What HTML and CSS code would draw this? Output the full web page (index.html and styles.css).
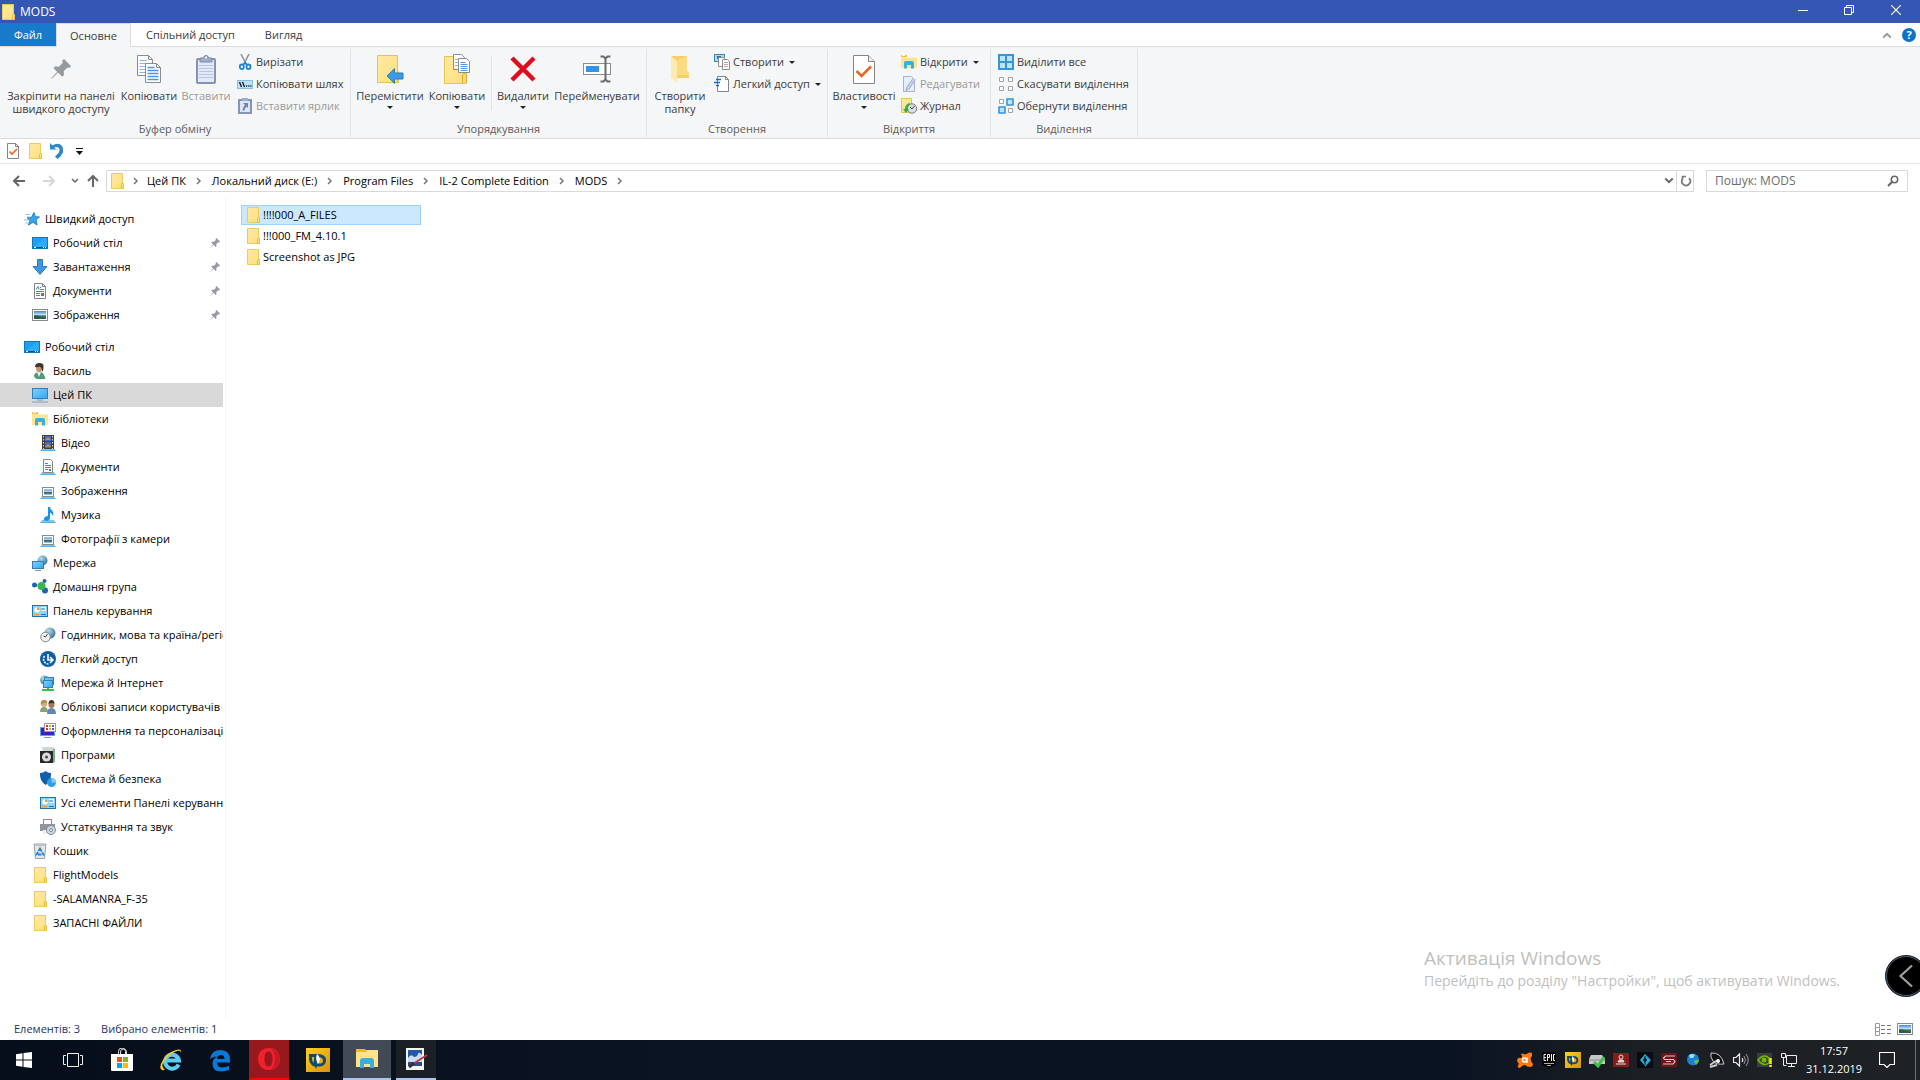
FILE: index.html
```
<!DOCTYPE html>
<html lang="uk">
<head>
  <meta charset="UTF-8">
  <title>MODS</title>
  <link rel="stylesheet" href="styles.css">
</head>
<body>

  <!-- Icon sprite -->
  <svg class="sprite" aria-hidden="true">
    <defs>
      <linearGradient id="gFolder" x1="0" y1="0" x2="1" y2="1"><stop offset="0" stop-color="#ffeaa6"/><stop offset="1" stop-color="#fddf78"/></linearGradient>
      <linearGradient id="gScreen" x1="0" y1="0" x2="1" y2="1"><stop offset="0" stop-color="#7fd0ff"/><stop offset="1" stop-color="#2fa6f5"/></linearGradient>
      <linearGradient id="gPhoto" x1="0" y1="0" x2="0" y2="1"><stop offset="0" stop-color="#3d87dd"/><stop offset=".5" stop-color="#cfe8f8"/><stop offset=".6" stop-color="#386a66"/><stop offset="1" stop-color="#3f8aa8"/></linearGradient>
      <linearGradient id="gGold" x1="0" y1="0" x2="1" y2="1"><stop offset="0" stop-color="#ffd21c"/><stop offset="1" stop-color="#d89010"/></linearGradient>
      <radialGradient id="gGlobe" cx=".35" cy=".3" r=".8"><stop offset="0" stop-color="#b7dcea"/><stop offset="1" stop-color="#2b6f95"/></radialGradient>
    </defs>

    <symbol id="folder" viewBox="0 0 16 16">
      <path d="M2.5.5h11v10h1v5h-12z" fill="url(#gFolder)" stroke="#eccb5c"/>
      <path d="M12.500 15.500v-4l1-1.500 1 1.500v4z" fill="#ffe28a" stroke="#e6bd3e"/>
    </symbol>
    <symbol id="pin" viewBox="0 0 20 20">
      <path d="M13 0l7 7-2 2-1.500-.6-3.800 3.800.3 3.800-1.800 1.800-4.200-4.200L1.500 19 0 20l1-1.700 5.200-5.300L2.500 9l1.800-1.700 3.600.4 3.900-3.900L11 2z" fill="#929ba1"/>
    </symbol>
    <symbol id="pages" viewBox="0 0 24 28">
      <path d="M.5.5h11l4 4v16H.5z" fill="#fff" stroke="#8c8c8c"/><path d="M11.500.5v4h4" fill="none" stroke="#8c8c8c"/>
      <path d="M2.500 5.500h7M2.500 8.500h11M2.500 11.500h11M2.500 14.500h11M2.500 17.500h11" stroke="#86b6ee"/>
      <path d="M8.500 8.500h11l4 4v15h-15z" fill="#fff" stroke="#8c8c8c"/><path d="M19.500 8.500v4h4" fill="none" stroke="#8c8c8c"/>
      <path d="M10.500 12.500h7M10.500 15.500h11M10.500 18.500h11M10.500 21.500h11M10.500 24.500h11" stroke="#4597ef" stroke-width="1.500"/>
    </symbol>
    <symbol id="paste" viewBox="0 0 20 29">
      <rect x="1" y="4" width="18" height="24" rx="1" fill="#e3eaf5" stroke="#8393b2" stroke-width="2"/>
      <path d="M3 10.500h14M3 13.500h14M3 16.500h14M3 19.500h14M3 22.500h14" stroke="#b6c6de"/>
      <path d="M4 3h3.500a2.500 2.500 0 015 0H16v4H4z" fill="#9faec6" stroke="#7b8aa8"/><circle cx="10" cy="2.500" r="1" fill="#fff"/>
    </symbol>
    <symbol id="cut" viewBox="0 0 16 16">
      <path d="M4 0L9.500 11M12 0L6.500 11" stroke="#8b949c" stroke-width="1.500"/>
      <ellipse cx="4.800" cy="12.800" rx="2" ry="2.300" fill="#fff" stroke="#1b84cf" stroke-width="1.800"/>
      <ellipse cx="11.500" cy="12.800" rx="2" ry="2.300" fill="#fff" stroke="#1b84cf" stroke-width="1.800"/>
      <path d="M6 11L8 8.500l2.200 2.500" stroke="#1b84cf" stroke-width="1.600" fill="none"/>
    </symbol>
    <symbol id="path" viewBox="0 0 16 16">
      <rect x=".5" y="4.500" width="15" height="8" fill="#b9e2fb" stroke="#86bfe2"/>
      <path d="M2.500 6l2 5M5.500 6l2 5" stroke="#12202b" stroke-width="1.400"/><path d="M9 10h1.200M11.200 10h1.200M13.300 10h1.200" stroke="#12202b" stroke-width="1.400"/>
    </symbol>
    <symbol id="shortcut" viewBox="0 0 16 16">
      <rect x="2" y="2" width="12" height="13" fill="#dde5f2" stroke="#8495b8" stroke-width="2"/><rect x="5" y="0" width="6" height="3" fill="#9eadc9"/>
      <path d="M6 5h5v5L9.500 8.500Q7.500 10 7.500 12.500H5.500Q5.500 9 8 7z" fill="#6d84ad"/>
    </symbol>
    <symbol id="move" viewBox="0 0 28 30">
      <path d="M1.500 1.500h20v16h1v11h-21z" fill="url(#gFolder)" stroke="#e6c24f"/><path d="M21.500 18v10" stroke="#e6c24f"/>
      <path d="M11 22l7.500-7.500v4.500H27v6h-8.500v4.500z" fill="#3a9be6" stroke="#2b7fc4"/>
    </symbol>
    <symbol id="copyto" viewBox="0 0 28 30">
      <path d="M1.500 2.500h18v15h4v12h-22z" fill="url(#gFolder)" stroke="#e6c24f"/><path d="M19.500 29V21l2-2 2 2v8" fill="#fddb70" stroke="#dcae34"/>
      <path d="M10.500.5h8l3 3v12h-11z" fill="#fff" stroke="#8c8c8c"/><path d="M12 5.500h6M12 8.500h3M12 11.500h3" stroke="#86b6ee"/>
      <path d="M15.500 4.500h8l3 3v11h-11z" fill="#fff" stroke="#8c8c8c"/><path d="M17.500 8.500h5M17.500 10.500h7M17.500 12.500h7M17.500 14.500h7M17.500 16.500h7" stroke="#4597ef"/>
    </symbol>
    <symbol id="delete" viewBox="0 0 26 26">
      <path d="M2 2l22 22M24 2L2 24" stroke="#e00b1c" stroke-width="4.500"/>
    </symbol>
    <symbol id="rename" viewBox="0 0 28 28">
      <rect x=".5" y="8.500" width="27" height="11" fill="#fff" stroke="#8c8c8c"/><rect x="3" y="11" width="13" height="6" fill="#2f95e8"/>
      <path d="M17.500 1.500h3l2 2 2-2h3M22.500 3v22M17.500 26.500h3l2-2 2 2h3" fill="none" stroke="#6a6a6a" stroke-width="2"/>
    </symbol>
    <symbol id="newfolder" viewBox="0 0 20 28">
      <path d="M1 1h16v15l2 1v6H1z" fill="#f7cf68"/><path d="M1 1l6 5v22l-4-3-2-3z" fill="#ffeab0"/><path d="M7 6l10-5v15l2 1v3H7z" fill="#fadb82"/>
    </symbol>
    <symbol id="newitem" viewBox="0 0 16 16">
      <rect x=".5" y=".5" width="10" height="7" fill="#a8dcf5" stroke="#3c87b4"/><rect x="3" y="2" width="4" height="3" fill="#356b8b"/>
      <path d="M4.500 3.500h6v9h-6z" fill="#fff" stroke="#909090"/><path d="M8.500 5.500h5l2 2v8h-7z" fill="#fff" stroke="#8c8c8c"/>
      <path d="M10 8.500h4M10 10.500h4M10 12.500h4" stroke="#c79ea5"/>
    </symbol>
    <symbol id="easy" viewBox="0 0 16 16">
      <path d="M3.500.5h8l3 3v12h-11z" fill="#fff" stroke="#858585"/><path d="M11.500.5v3h3" fill="none" stroke="#858585"/>
      <path d="M2 3.500h5M0 6.500h6M2 9.500h3" stroke="#1c6fae" stroke-width="1.300"/>
    </symbol>
    <symbol id="props" viewBox="0 0 22 29">
      <path d="M.5.5h15l6 6v22H.5z" fill="#fff" stroke="#858585"/><path d="M15.500.5v6h6" fill="#eee" stroke="#858585"/>
      <path d="M3.500 16l5 5L18 11.500" fill="none" stroke="#ee6420" stroke-width="2.500"/>
    </symbol>
    <symbol id="propsSmall" viewBox="0 0 16 16">
      <path d="M2.500.5h8l3 3v12h-11z" fill="#fff" stroke="#858585"/><path d="M10.500.5v3h3" fill="none" stroke="#858585"/>
      <path d="M4.500 8.500L7 11l5-5" fill="none" stroke="#ee6420" stroke-width="1.600"/>
    </symbol>
    <symbol id="library" viewBox="0 0 16 16">
      <path d="M0 2h5l1 1.500h10V14H0z" fill="#ffe590"/><path d="M0 1h6v2H0z" fill="#f0c248"/><path d="M1 1.500h3" stroke="#fff8d8"/>
      <path d="M3 14.500V9q0-2 2-2h6q2 0 2 2v5.500h-3V11H6v3.500z" fill="#35b0e4"/>
    </symbol>
    <symbol id="edit" viewBox="0 0 16 16">
      <path d="M2.500.5h8l3 3v12h-11z" fill="#e6eefa" stroke="#a5b4d2"/><path d="M14.500 3.500L8 13l-3 1.500.5-3L12 2.500" fill="#c5d3ea" stroke="#9cadcc"/>
    </symbol>
    <symbol id="history" viewBox="0 0 16 16">
      <path d="M.5.5h10v14H.5z" fill="url(#gFolder)" stroke="#e6c24f"/><circle cx="11" cy="10.500" r="4.700" fill="#dcdedf" stroke="#77797a"/>
      <path d="M11 11l2.500-3M11 11L9 9" stroke="#444"/><path d="M2 11h2q0-5 5-6v2q-3 1-2.500 4H8l-3 4z" fill="#2bb23c"/>
    </symbol>
    <symbol id="selAll" viewBox="0 0 16 16">
      <path d="M1 1h14v14H1z" fill="#bfe3fb" stroke="#3395dd" stroke-width="2"/><path d="M8 0v16M0 8h16" stroke="#3395dd" stroke-width="2"/>
    </symbol>
    <symbol id="selNone" viewBox="0 0 16 16">
      <path d="M1.500 1.500h4v4h-4zM10.500 1.500h4v4h-4zM1.500 10.500h4v4h-4zM10.500 10.500h4v4h-4z" fill="#fff" stroke="#a2a2a2"/>
    </symbol>
    <symbol id="selInv" viewBox="0 0 16 16">
      <path d="M1.500 1.500h4v4h-4zM10.500 10.500h4v4h-4z" fill="#fff" stroke="#a2a2a2"/><path d="M9 1h6v6H9zM1 9h6v6H1z" fill="#bfe3fb" stroke="#3395dd" stroke-width="1.600"/>
    </symbol>
    <symbol id="undo" viewBox="0 0 16 16">
      <path d="M1 0v6.500h6.500L5 4.500q4.500-1.500 5.500 1.500T6 13.500L8.500 16Q15 11 14 6T9 .7Q6 .5 3.500 2.500z" fill="#2a86cf"/>
    </symbol>
    <symbol id="arrow" viewBox="0 0 16 16"><path d="M14 8H3M8 3L3 8l5 5" fill="none" stroke="currentColor" stroke-width="2"/></symbol>
    <symbol id="chev" viewBox="0 0 8 8"><path d="M1 2l3 3 3-3" fill="none" stroke="currentColor" stroke-width="1.500"/></symbol>
    <symbol id="star" viewBox="0 0 16 16">
      <path d="M10 1.500l1.300 4.200 4.200.3-3.500 2.600L13 14l-4-2.700L4.500 14l1.500-4.500-3-2.700 4.500-.5z" fill="#35a7ec" stroke="#1f84c4"/><path d="M1.500 3.500h4M3 6h3M0 9h4M1.500 12h3" stroke="#7ac3ee"/>
    </symbol>
    <symbol id="desktop" viewBox="0 0 16 16">
      <rect x=".5" y="2.500" width="15" height="11" fill="#18a0fb" stroke="#1478b5"/><path d="M1 13L12 3h3v10z" fill="#3fb2ff" opacity=".6"/><path d="M1 12.500h14" stroke="#0b5386"/><path d="M2 12.500h2M11 12.500h1M13 12.500h1" stroke="#fff"/>
    </symbol>
    <symbol id="down" viewBox="0 0 16 16"><path d="M5.500.5h5v7h4.500L8 15.500 1 7.500h4.500z" fill="#3b97e3" stroke="#2c78b8"/></symbol>
    <symbol id="doc" viewBox="0 0 16 16">
      <path d="M2.500.5h8l3 3v12h-11z" fill="#fff" stroke="#858585"/><path d="M10.500.5v3h3" fill="none" stroke="#858585"/>
      <path d="M4 6.500l2-3 1 3M8 4.500h1M8 6.500h4M4 8.500h8M4 10.500h4M4 12.500h4" fill="none" stroke="#2492d8"/><path d="M9 10h3v3H9z" fill="#4b7fa3"/>
    </symbol>
    <symbol id="picture" viewBox="0 0 16 16">
      <rect x=".5" y="2.500" width="15" height="11" fill="#fff" stroke="#8a8a8a"/><rect x="2" y="4" width="12" height="8" fill="url(#gPhoto)"/><path d="M2 8.500q3-1 7 1.500l5 .5V12H2z" fill="#315c4c"/>
    </symbol>
    <symbol id="user" viewBox="0 0 16 16">
      <path d="M2 13q0-3 4-4h3q3 1 4.500 7H5q-3-1-3-3z" fill="#4f9c78"/><path d="M5 9l2 5 2-5z" fill="#f0f0ec"/><ellipse cx="7" cy="5" rx="3" ry="4.200" fill="#c49470"/><path d="M3 4q0-4 4.500-4T11.500 4q.3 3-1.500 5Q10 5 8 3.500 6 4.500 3 4z" fill="#3d362e"/>
    </symbol>
    <symbol id="pc" viewBox="0 0 16 16">
      <rect x=".5" y="1.500" width="15" height="10" fill="url(#gScreen)" stroke="#2f7fb8"/><path d="M5 13h6M0 15h16" stroke="#7d9fbf"/>
    </symbol>
    <symbol id="stand" viewBox="0 0 16 16"><path d="M2 13h12l1.500 2.500H.5z" fill="#7cc8f5"/><path d="M.5 15.500h15" stroke="#58aee4"/></symbol>
    <symbol id="video" viewBox="0 0 16 16">
      <use href="#stand"/><rect x="2" y="0" width="12" height="14" fill="#43403e"/><path d="M3.500 1v13M12.500 1v13" stroke="#d6d6d6" stroke-dasharray="1.500 1.500"/><rect x="5" y="1" width="6" height="5" fill="#3b6fc0"/><rect x="5" y="7" width="6" height="6" fill="#3b6fc0"/><path d="M5 5l3-3 3 3zM5 12l3-3 3 3z" fill="#d88638"/>
    </symbol>
    <symbol id="docLib" viewBox="0 0 16 16">
      <use href="#stand"/><path d="M3.500.5h7l2 2v11h-9z" fill="#fff" stroke="#858585"/><path d="M5 4.500h3M5 6.500h6M5 8.500h6M5 10.500h3" stroke="#2492d8"/><path d="M9 10h2v2H9z" fill="#4b7fa3"/>
    </symbol>
    <symbol id="picLib" viewBox="0 0 16 16">
      <use href="#stand"/><rect x="2.500" y="4.500" width="11" height="9" fill="#fff" stroke="#8a8a8a"/><rect x="4" y="6.500" width="8" height="5" fill="url(#gPhoto)"/>
    </symbol>
    <symbol id="music" viewBox="0 0 16 16">
      <use href="#stand"/><path d="M8 0h2q0 2 2 3.500T13 9q-1-3-3-3.500V11q-.3 3-3.500 3T4 11.500 8 9z" fill="#1497ea"/>
    </symbol>
    <symbol id="network" viewBox="0 0 16 16">
      <circle cx="10.500" cy="5.500" r="5" fill="url(#gGlobe)"/><rect x=".5" y="6.500" width="11" height="7" fill="url(#gScreen)" stroke="#2f7fb8"/><path d="M3 15.500h6" stroke="#7d9fbf"/>
    </symbol>
    <symbol id="homegroup" viewBox="0 0 16 16">
      <path d="M3 6l7 1 2-5M10 7l3 5" stroke="#9cc8dd" stroke-width="1.500" fill="none"/><circle cx="2.500" cy="6" r="2.500" fill="#1d63ad"/><circle cx="12.500" cy="2" r="2" fill="#1d63ad"/><circle cx="13" cy="11.500" r="3" fill="#1d63ad"/><circle cx="9.500" cy="7" r="4" fill="#3bb54a"/>
    </symbol>
    <symbol id="panel" viewBox="0 0 16 16">
      <rect x=".5" y="2.500" width="15" height="11" fill="#8fd3f8" stroke="#1b77b2"/><circle cx="5" cy="7" r="2.700" fill="#fff"/><path d="M5 7V4.300a2.700 2.700 0 012.700 2.700z" fill="#f0a030"/><rect x="9" y="4" width="5" height="4" fill="#eaf7ff"/><path d="M2 11.500h5" stroke="#f0a030" stroke-width="1.500"/><path d="M9 6h4M9 11.500h5" stroke="#1b77b2"/>
    </symbol>
    <symbol id="clock" viewBox="0 0 16 16">
      <circle cx="10" cy="6" r="5.500" fill="url(#gGlobe)"/><circle cx="5.500" cy="10" r="4.800" fill="#f0f1f2" stroke="#7f8488"/><path d="M5.500 10l2-3M5.500 10l-2-1" stroke="#444"/>
    </symbol>
    <symbol id="access" viewBox="0 0 16 16">
      <circle cx="8" cy="8" r="8" fill="#0c5ea8"/><path d="M8 3v6h4M10 6l3 3-3 3" stroke="#fff" stroke-width="1.600" fill="none"/><path d="M4.500 5a5 5 0 004 8" stroke="#fff" stroke-width="1.500" fill="none" stroke-dasharray="2 1"/>
    </symbol>
    <symbol id="internet" viewBox="0 0 16 16">
      <circle cx="4.500" cy="5" r="4.500" fill="url(#gGlobe)"/><rect x="4.500" y="2.500" width="9" height="7" fill="url(#gScreen)" stroke="#2f7fb8"/><rect x="3.500" y="5.500" width="9" height="7" fill="url(#gScreen)" stroke="#2f7fb8"/><path d="M2 15h12M8 13v2" stroke="#3eb64a" stroke-width="2"/>
    </symbol>
    <symbol id="users" viewBox="0 0 16 16">
      <path d="M0 13q0-5 4-5t4 5z" fill="#8ba36a"/><circle cx="4" cy="5" r="3" fill="#d9ad82"/><path d="M1 6q-1-5 3-5t3 3q-3-1-4 0z" fill="#a98a4a"/><path d="M7 15q0-6 4.500-6T16 15z" fill="#5f86b8"/><circle cx="11.500" cy="6" r="3" fill="#a87451"/><path d="M8.500 5q0-4 3-4t3 4q-2-2-6 0z" fill="#3d362e"/>
    </symbol>
    <symbol id="personal" viewBox="0 0 16 16">
      <rect x=".5" y="4.500" width="14" height="8" fill="#4a18c8" stroke="#58a9da"/><rect x="4.500" y=".5" width="11" height="8" fill="#fff" stroke="#9a9a9a"/><path d="M6 3h2M6 6h2" stroke="#d8342a" stroke-width="2"/><path d="M9 3h2M9 6h2" stroke="#eda51a" stroke-width="2"/><path d="M12 3h2M12 6h2" stroke="#2f72c8" stroke-width="2"/><path d="M4 14.500h7" stroke="#7d9fbf"/>
    </symbol>
    <symbol id="programs" viewBox="0 0 16 16">
      <path d="M2 0h11l2 2v14H5z" fill="#cfd6d6"/><path d="M13 2h2v13h-2z" fill="#78b28c"/><rect x="0" y="4" width="13" height="12" fill="#282828"/><circle cx="6.500" cy="10" r="4.500" fill="#dadada"/><circle cx="6.500" cy="10" r="1.500" fill="#4a4a4a"/>
    </symbol>
    <symbol id="security" viewBox="0 0 16 16">
      <path d="M0 2q3 .3 5.500-2Q8 2.300 11 2q.5 8-5.500 12Q-.5 10 0 2z" fill="#0f5fae"/><circle cx="11.500" cy="11.500" r="4.500" fill="#2e9fe8"/><path d="M11.500 11.500V7a4.500 4.500 0 014.500 4.500z" fill="#84cdf5"/>
    </symbol>
    <symbol id="printer" viewBox="0 0 16 16">
      <rect x="3.500" y=".5" width="8" height="6" fill="#fff" stroke="#8b8b8b"/><rect x="0" y="5" width="15" height="7" fill="#8d969c"/><path d="M3 11h7v4H3z" fill="#eee"/><circle cx="11" cy="11" r="4.500" fill="#cfd8de" stroke="#818c93"/><circle cx="11" cy="11" r="1.500" fill="#fff" stroke="#6085a2"/>
    </symbol>
    <symbol id="bin" viewBox="0 0 16 16">
      <path d="M2 1h12l-1.500 14.500h-9z" fill="#e2e8ec" stroke="#9aa3a9"/><path d="M2 2.500h12" stroke="#b8bec2"/><path d="M8 5.500l3.500 6h-7z" fill="none" stroke="#2581cf" stroke-width="1.800" stroke-dasharray="3.500 1"/>
    </symbol>
    <symbol id="dee" viewBox="0 0 24 24">
      <rect width="24" height="24" fill="url(#gGold)"/>
      <path d="M3 7.500h9q6.500 0 6.500 5T12 17H9M5 8q-2 6 4 9.500" fill="none" stroke="#124a6c" stroke-width="3"/>
      <path d="M9 6q5 4 1 15-4-6-1-15z" fill="#124a6c"/><path d="M11 6q5 4 1 10-3-5-1-10z" fill="#fff"/>
    </symbol>
  </svg>

  <header class="titlebar">
    <svg class="icon"><use href="#folder"/></svg>
    <h1>MODS</h1>
    <div class="window-buttons">
      <button aria-label="Згорнути"><svg class="icon-sm" viewBox="0 0 10 10"><path d="M0 5.500h10" stroke="#fff"/></svg></button>
      <button aria-label="Відновити"><svg class="icon-sm" viewBox="0 0 10 10"><path d="M.5 2.500h7v7h-7zM2.500 2.500v-2h7v7h-2" fill="none" stroke="#fff"/></svg></button>
      <button aria-label="Закрити"><svg class="icon-sm" viewBox="0 0 10 10"><path d="M0 0l10 10M10 0L0 10" stroke="#fff" stroke-width="1.200"/></svg></button>
    </div>
  </header>

  <nav class="tabs">
    <button class="tab file">Файл</button>
    <button class="tab active">Основне</button>
    <button class="tab">Спільний доступ</button>
    <button class="tab">Вигляд</button>
    <div class="tabs-right">
      <button aria-label="Згорнути стрічку"><svg class="icon-sm up"><use href="#chev"/></svg></button>
      <button class="help" aria-label="Довідка">?</button>
    </div>
  </nav>

  <!-- Ribbon -->
  <section class="ribbon">
    <div class="group">
      <div class="group-body">
        <button class="big w116"><span class="pic"><svg class="pin-big"><use href="#pin"/></svg></span>Закріпити на панелі<br>швидкого доступу</button>
        <button class="big w60"><span class="pic"><svg width="24" height="28"><use href="#pages"/></svg></span>Копіювати</button>
        <button class="big w54" disabled><span class="pic"><svg width="20" height="29"><use href="#paste"/></svg></span>Вставити</button>
        <div class="small-list w114">
          <button><svg class="icon"><use href="#cut"/></svg>Вирізати</button>
          <button><svg class="icon"><use href="#path"/></svg>Копіювати шлях</button>
          <button disabled><svg class="icon"><use href="#shortcut"/></svg>Вставити ярлик</button>
        </div>
      </div>
      <div class="group-name">Буфер обміну</div>
    </div>

    <div class="group">
      <div class="group-body">
        <button class="big w72"><span class="pic"><svg width="28" height="30"><use href="#move"/></svg></span>Перемістити<i class="caret"></i></button>
        <button class="big w62"><span class="pic"><svg width="28" height="30"><use href="#copyto"/></svg></span>Копіювати<i class="caret"></i></button>
        <div class="split"></div>
        <button class="big w56"><span class="pic"><svg width="26" height="26"><use href="#delete"/></svg></span>Видалити<i class="caret"></i></button>
        <button class="big w92"><span class="pic"><svg width="28" height="28"><use href="#rename"/></svg></span>Перейменувати</button>
      </div>
      <div class="group-name">Упорядкування</div>
    </div>

    <div class="group">
      <div class="group-body">
        <button class="big w60"><span class="pic"><svg width="20" height="28"><use href="#newfolder"/></svg></span>Створити<br>папку</button>
        <div class="small-list w114">
          <button><svg class="icon"><use href="#newitem"/></svg>Створити<i class="caret"></i></button>
          <button><svg class="icon"><use href="#easy"/></svg>Легкий доступ<i class="caret"></i></button>
        </div>
      </div>
      <div class="group-name">Створення</div>
    </div>

    <div class="group">
      <div class="group-body">
        <button class="big w66"><span class="pic"><svg width="22" height="29"><use href="#props"/></svg></span>Властивості<i class="caret"></i></button>
        <div class="small-list w90">
          <button><svg class="icon"><use href="#library"/></svg>Відкрити<i class="caret"></i></button>
          <button disabled><svg class="icon"><use href="#edit"/></svg>Редагувати</button>
          <button><svg class="icon"><use href="#history"/></svg>Журнал</button>
        </div>
      </div>
      <div class="group-name">Відкриття</div>
    </div>

    <div class="group">
      <div class="group-body">
        <div class="small-list w140">
          <button><svg class="icon"><use href="#selAll"/></svg>Виділити все</button>
          <button><svg class="icon"><use href="#selNone"/></svg>Скасувати виділення</button>
          <button><svg class="icon"><use href="#selInv"/></svg>Обернути виділення</button>
        </div>
      </div>
      <div class="group-name">Виділення</div>
    </div>
  </section>

  <div class="quick">
    <button aria-label="Властивості"><svg class="icon"><use href="#propsSmall"/></svg></button>
    <button aria-label="Створити папку"><svg class="icon"><use href="#folder"/></svg></button>
    <button aria-label="Скасувати"><svg class="icon"><use href="#undo"/></svg></button>
    <button aria-label="Налаштувати панель"><svg class="icon" viewBox="0 0 16 16"><path d="M5 5.500h7" stroke="#111"/><path d="M5 8h7l-3.500 4z" fill="#111"/></svg></button>
  </div>

  <!-- Address bar -->
  <div class="address-row">
    <button class="go" aria-label="Назад"><svg class="icon"><use href="#arrow"/></svg></button>
    <button class="go" aria-label="Вперед" disabled><svg class="icon flip"><use href="#arrow"/></svg></button>
    <button class="go recent" aria-label="Останні розташування"><svg class="icon-xs"><use href="#chev"/></svg></button>
    <button class="go" aria-label="Вгору"><svg class="icon up-arrow"><use href="#arrow"/></svg></button>
    <div class="address">
      <svg class="icon"><use href="#folder"/></svg>
      <svg class="sep first"><use href="#chev"/></svg>
      <a href="#">Цей ПК</a><svg class="sep"><use href="#chev"/></svg>
      <a href="#">Локальний диск (E:)</a><svg class="sep"><use href="#chev"/></svg>
      <a href="#">Program Files</a><svg class="sep"><use href="#chev"/></svg>
      <a href="#">IL-2 Complete Edition</a><svg class="sep"><use href="#chev"/></svg>
      <a href="#">MODS</a><svg class="sep"><use href="#chev"/></svg>
      <button class="drop" aria-label="Попередні розташування"><svg class="icon-sm"><use href="#chev"/></svg></button>
      <button class="refresh" aria-label="Оновити"><svg class="icon-md" viewBox="0 0 12 12"><path d="M9 3.200A4.200 4.200 0 112.500 4V1.500H6" fill="none" stroke="#777" stroke-width="1.700"/></svg></button>
    </div>
    <div class="search">
      <input type="text" placeholder="Пошук: MODS" aria-label="Пошук: MODS">
      <svg class="icon-md" viewBox="0 0 12 12"><circle cx="7.500" cy="4.500" r="3.200" fill="none" stroke="#666" stroke-width="1.500"/><path d="M5 7L1 11" stroke="#666" stroke-width="2"/></svg>
    </div>
  </div>

  <main class="content">
    <nav class="sidebar">
      <ul>
        <li><a href="#" class="top"><svg class="icon"><use href="#star"/></svg>Швидкий доступ</a></li>
        <li><a href="#"><svg class="icon"><use href="#desktop"/></svg>Робочий стіл<svg class="pin"><use href="#pin"/></svg></a></li>
        <li><a href="#"><svg class="icon"><use href="#down"/></svg>Завантаження<svg class="pin"><use href="#pin"/></svg></a></li>
        <li><a href="#"><svg class="icon"><use href="#doc"/></svg>Документи<svg class="pin"><use href="#pin"/></svg></a></li>
        <li><a href="#"><svg class="icon"><use href="#picture"/></svg>Зображення<svg class="pin"><use href="#pin"/></svg></a></li>
      </ul>
      <ul>
        <li><a href="#" class="top"><svg class="icon"><use href="#desktop"/></svg>Робочий стіл</a></li>
        <li><a href="#"><svg class="icon"><use href="#user"/></svg>Василь</a></li>
        <li><a href="#" class="current"><svg class="icon"><use href="#pc"/></svg>Цей ПК</a></li>
        <li><a href="#"><svg class="icon"><use href="#library"/></svg>Бібліотеки</a></li>
        <li><a href="#" class="sub"><svg class="icon"><use href="#video"/></svg>Відео</a></li>
        <li><a href="#" class="sub"><svg class="icon"><use href="#docLib"/></svg>Документи</a></li>
        <li><a href="#" class="sub"><svg class="icon"><use href="#picLib"/></svg>Зображення</a></li>
        <li><a href="#" class="sub"><svg class="icon"><use href="#music"/></svg>Музика</a></li>
        <li><a href="#" class="sub"><svg class="icon"><use href="#picLib"/></svg>Фотографії з камери</a></li>
        <li><a href="#"><svg class="icon"><use href="#network"/></svg>Мережа</a></li>
        <li><a href="#"><svg class="icon"><use href="#homegroup"/></svg>Домашня група</a></li>
        <li><a href="#"><svg class="icon"><use href="#panel"/></svg>Панель керування</a></li>
        <li><a href="#" class="sub"><svg class="icon"><use href="#clock"/></svg>Годинник, мова та країна/регіон</a></li>
        <li><a href="#" class="sub"><svg class="icon"><use href="#access"/></svg>Легкий доступ</a></li>
        <li><a href="#" class="sub"><svg class="icon"><use href="#internet"/></svg>Мережа й Інтернет</a></li>
        <li><a href="#" class="sub"><svg class="icon"><use href="#users"/></svg>Облікові записи користувачів</a></li>
        <li><a href="#" class="sub"><svg class="icon"><use href="#personal"/></svg>Оформлення та персоналізація</a></li>
        <li><a href="#" class="sub"><svg class="icon"><use href="#programs"/></svg>Програми</a></li>
        <li><a href="#" class="sub"><svg class="icon"><use href="#security"/></svg>Система й безпека</a></li>
        <li><a href="#" class="sub"><svg class="icon"><use href="#panel"/></svg>Усі елементи Панелі керування</a></li>
        <li><a href="#" class="sub"><svg class="icon"><use href="#printer"/></svg>Устаткування та звук</a></li>
        <li><a href="#"><svg class="icon"><use href="#bin"/></svg>Кошик</a></li>
        <li><a href="#"><svg class="icon"><use href="#folder"/></svg>FlightModels</a></li>
        <li><a href="#"><svg class="icon"><use href="#folder"/></svg>-SALAMANRA_F-35</a></li>
        <li><a href="#"><svg class="icon"><use href="#folder"/></svg>ЗАПАСНІ ФАЙЛИ</a></li>
      </ul>
    </nav>

    <ul class="files">
      <li><a href="#" class="selected"><svg class="icon"><use href="#folder"/></svg>!!!!000_A_FILES</a></li>
      <li><a href="#"><svg class="icon"><use href="#folder"/></svg>!!!000_FM_4.10.1</a></li>
      <li><a href="#"><svg class="icon"><use href="#folder"/></svg>Screenshot as JPG</a></li>
    </ul>

    <div class="watermark">
      <p class="watermark-title">Активація Windows</p>
      <p>Перейдіть до розділу "Настройки", щоб активувати Windows.</p>
    </div>
    <button class="drawer" aria-label="Відкрити панель"><svg width="42" height="42" viewBox="0 0 42 42"><circle cx="21" cy="21" r="20.500" fill="#000" stroke="#222"/><circle cx="21" cy="21" r="19.500" fill="none" stroke="#3c6a80"/><path d="M27 10.500L15.500 21 27 31.500" fill="none" stroke="#a0a0a0" stroke-width="2.200"/></svg></button>
  </main>

  <div class="status">
    <span>Елементів: 3</span>
    <span>Вибрано елементів: 1</span>
    <div class="views">
      <button aria-label="Таблиця"><svg class="icon" viewBox="0 0 16 16"><path d="M.5 2.500h4v12h-4zM.5 6.500h4M.5 10.500h4" fill="none" stroke="#999"/><path d="M6 4.500h10M6 8.500h10M6 12.500h10" stroke="#777" stroke-dasharray="4 2"/></svg></button>
      <button aria-label="Великі ескізи"><svg class="icon"><use href="#picture"/></svg></button>
    </div>
  </div>

  <footer class="taskbar">
    <button class="task" aria-label="Пуск"><svg width="16" height="16" viewBox="0 0 16 16"><path d="M0 2.200L6.500 1.300V7.500H0zM7.500 1.100L16 0v7.500H7.500zM0 8.500h6.500v6.200L0 13.800zM7.500 8.500H16V16l-8.500-1.100z" fill="#fff"/></svg></button>
    <button class="task" aria-label="Подання завдань"><svg width="20" height="16" viewBox="0 0 20 16"><path d="M4.500 1.500h11v13h-11zM3 3.500H.5v9H3M17 3.500h2.500v9H17" fill="none" stroke="#f0f0f0"/></svg></button>
    <button class="task" aria-label="Store"><svg width="24" height="24" viewBox="0 0 24 24"><path d="M8.500 6V3.500a3.500 3.500 0 017 0V6M10.500 6V4a3 3 0 016 0v2" fill="none" stroke="#ddd"/><path d="M1 6h22v16q0 1-1 1H2q-1 0-1-1z" fill="#fff"/><path d="M7 9h5v5H7z" fill="#f04e23"/><path d="M13 9h5v5h-5z" fill="#7fba00"/><path d="M7 15h5v5H7z" fill="#00a4ef"/><path d="M13 15h5v5h-5z" fill="#ffb900"/></svg></button>
    <button class="task" aria-label="Internet Explorer"><svg width="24" height="24" viewBox="0 0 24 24"><path d="M19.500 16.500a7 7 0 11.500-4H7" fill="none" stroke="#5ecbf5" stroke-width="4"/><path d="M3 22Q-1 20 4 12T17 2q6-2 5 3 0-3-4-2-6 2-11 8T4 19q0 2 2 2-1 2-3 1z" fill="#f6c929"/></svg></button>
    <button class="task" aria-label="Edge"><svg width="22" height="24" viewBox="0 0 22 24"><path d="M1 11Q2.500 2 11.500 2 21 2 21 12v2.500H8q0 5 6 5 3 0 6-1.800v4q-3 1.800-8 1.800-8.500 0-8.500-8Q3.500 11 8 8.500 5 8 1 11zM8 11h7.500q0-4-3.500-4t-4 4z" fill="#0b79d8"/></svg></button>
    <button class="task" aria-label="Opera"><span class="opera"><svg width="24" height="24" viewBox="0 0 24 24"><path d="M12 1C5 1 1 5.500 1 12s4 11 11 11 11-4.500 11-11S19 1 12 1zm-.5 3.500q4 0 4 7.500t-4 7.500-4-7.500 4-7.500z" fill="#f0202c" fill-rule="evenodd"/><path d="M14 1.500q9 2 9 10.500t-9 10.500q4-4 4-10.500T14 1.500z" fill="#c81826"/></svg></span></button>
    <button class="task" aria-label="D"><svg width="24" height="24"><use href="#dee"/></svg></button>
    <button class="task active" aria-label="Провідник"><svg width="24" height="24" viewBox="0 0 24 24"><path d="M1 3h22v17H1z" fill="#ffe28a"/><path d="M1 2h9l2 3H1z" fill="#e8b93c"/><path d="M5 21v-7q0-3 3-3h8q3 0 3 3v7h-4v-4H9v4z" fill="#3aaee0"/></svg></button>
    <button class="task open" aria-label="Редактор зображень"><span><svg width="24" height="24" viewBox="0 0 24 24"><rect x="2" y="1" width="18" height="22" fill="#f4f6fa"/><rect x="4" y="3" width="14" height="16" fill="#2457a8"/><path d="M4 11q3-5 6-1 3 0 4-3t4 1v11H4z" fill="#c9dcf0"/><path d="M4 15h14v4H4z" fill="#2b4f8a"/><path d="M9 17L23 8" stroke="#b23a40" stroke-width="2"/><path d="M5 20l5-4" stroke="#333" stroke-width="3"/></svg></span></button>

    <div class="tray">
      <svg class="icon" viewBox="0 0 16 16"><path d="M4 2q1-1 3 0 2 1 4-1 2-1 4 0v3q-2 2-1 4 0 2 2 4 0 3-3 3t-5-2q-2 0-4 2-2 2-3 0-1-1 1-3-2-2-2-4 1-3 4-2 2-1 0-4z" fill="#ff7a13"/><circle cx="7.500" cy="8" r="2" fill="none" stroke="#fff" stroke-width="1.500"/><path d="M10 5.500V11" stroke="#fff" stroke-width="1.500"/></svg>
      <svg class="icon" viewBox="0 0 16 16"><path d="M1 0h14v13l-7 3-7-3z" fill="#050505"/><path d="M5 2.500H3v6h2M3 5.500h2M6.500 9V2.500h2v3h-2M10.500 2v7M14 2.500h-1.500v6H14" fill="none" stroke="#eee"/><path d="M3 11.500h10M6 13.500h4" stroke="#aaa"/></svg>
      <svg class="icon"><use href="#dee"/></svg>
      <svg class="icon" viewBox="0 0 16 16"><path d="M2 3h11l3 4v5H0V7z" fill="#c5c8ca"/><path d="M0 8h16" stroke="#888"/><path d="M5 10l4 4 6-9" fill="none" stroke="#3fc04a" stroke-width="3"/></svg>
      <svg class="icon" viewBox="0 0 16 16"><rect y="1" width="16" height="14" rx="1" fill="#8c1a18"/><circle cx="8" cy="5" r="2" fill="none" stroke="#ddd"/><path d="M6 8h4l1 2H5zM3 12h10" fill="#ccc" stroke="#ddd"/></svg>
      <svg class="icon" viewBox="0 0 16 16"><rect width="16" height="16" fill="#080c10"/><path d="M3 8l5-6v3L6 8l2 3v3zM8 2l6 6-6 7v-4l2-3-2-3z" fill="#2aa8d8"/><path d="M8 4v9" stroke="#0c2a3c"/></svg>
      <svg class="icon" viewBox="0 0 16 16"><rect y="1" width="16" height="14" rx="1" fill="#6a1517"/><path d="M14 4H4.500L2.500 6l1 1.500h9L14 9.500 12 12H2M5 9.500h5" fill="none" stroke="#ccc" stroke-width="1.200"/></svg>
      <svg class="icon" viewBox="0 0 16 16"><circle cx="8" cy="7.500" r="6" fill="#1b7fd8"/><path d="M4 3q3-2 6 0l-2 3H5z" fill="#8fe0ff"/><path d="M9 9q4-3 5 0l-3 4z" fill="#5fc24d"/></svg>
      <svg class="icon" viewBox="0 0 16 16"><path d="M2 1q10-1 13 11-8 1-11-3T2 1z" fill="#111" stroke="#ccc"/><path d="M1 13l6-4M1 15l7-2" stroke="#ccc" stroke-width="2"/><circle cx="9" cy="9" r="2" fill="#fff"/></svg>
      <svg class="icon" viewBox="0 0 16 16"><path d="M.5 5.500h2.500L6.500 2v12L3 10.500H.5zM9 6q1.500 2 0 4" fill="none" stroke="#eee" stroke-width="1.200"/><path d="M11 4q3 4 0 8M13 2q4.500 6 0 12" fill="none" stroke="#999"/></svg>
      <svg class="icon" viewBox="0 0 16 16"><rect y="1" width="15" height="14" fill="#393e42"/><path d="M1 8q6-7 11-2v5Q6 15 1 8z" fill="none" stroke="#76b900" stroke-width="1.500"/><circle cx="7" cy="8" r="2.500" fill="#76b900"/><path d="M13.500 6v6M13.500 13v2" stroke="#ffe600" stroke-width="2.500"/></svg>
      <svg class="icon" viewBox="0 0 16 16"><path d="M5.500 3.500h10v8h-10zM.5 1.500h4v4h-4zM2.500 5.500v8h3M10.500 11.500v3M7 14.500h7" fill="none" stroke="#eee"/></svg>
      <div class="time">17:57<br>31.12.2019</div>
      <button aria-label="Сповіщення"><svg class="icon" viewBox="0 0 16 16"><path d="M.5.500h15v12H11l-3 3-3-3H.500z" fill="none" stroke="#fff" stroke-width="1.200"/></svg></button>
    </div>
  </footer>
</body>
</html>
```
FILE: styles.css
```
* {
  box-sizing: border-box;
}
body {
  margin: 0;
  height: 100vh;
  display: flex;
  flex-direction: column;
  overflow: hidden;
  background-color: #fff;
  color: #000;
  font-family: "Open Sans", "Noto Sans", sans-serif;
  font-size: 11px;
  line-height: 16px;
}
button {
  padding: 0;
  border: none;
  background: none;
  font: inherit;
  color: inherit;
  white-space: nowrap;
}
a {
  color: inherit;
  text-decoration: none;
  white-space: nowrap;
}
ul {
  list-style: none;
  margin: 0;
  padding: 0;
}
svg {
  flex: none;
  display: block;
}
.sprite {
  position: absolute;
  width: 0;
  height: 0;
}
.icon {
  width: 16px;
  height: 16px;
}
.icon-xs {
  width: 8px;
  height: 8px;
}
.icon-sm {
  width: 10px;
  height: 10px;
}
.icon-md {
  width: 12px;
  height: 12px;
}
.caret {
  border: 3px solid transparent;
  border-top-color: #222;
  border-bottom: none;
}

/* Title bar */
.titlebar {
  display: flex;
  align-items: center;
  height: 23px;
  gap: 4px;
  background-color: #3557b3;
  color: #fff;
}
.titlebar h1 {
  margin: 0;
  font-size: 12px;
  font-weight: normal;
}
.window-buttons {
  display: flex;
  align-self: flex-start;
  margin-left: auto;
  height: 20px;
}
.window-buttons button {
  width: 46px;
  display: flex;
  align-items: center;
  justify-content: center;
}
.window-buttons button:last-child {
  width: 48px;
}

/* Tabs */
.tabs {
  display: flex;
  height: 24px;
  border-bottom: 1px solid #dadbdc;
  color: #3b3b3b;
}
.tab {
  padding: 0 15px;
}
.tab.file {
  width: 56px;
  padding: 0;
  background-color: #1979ca;
  color: #fff;
}
.tab.active {
  width: 75px;
  height: 24px;
  padding: 0;
  background-color: #f5f6f7;
  border: 1px solid #dadbdc;
  border-bottom: none;
}
.tabs-right {
  display: flex;
  align-items: center;
  gap: 10px;
  margin-left: auto;
  padding-right: 4px;
  color: #999;
}
.up {
  transform: rotate(180deg);
}
.help {
  width: 14px;
  height: 14px;
  border-radius: 50%;
  background-color: #0d73c8;
  color: #fff;
  font-weight: bold;
  line-height: 14px;
}

/* Ribbon */
.ribbon {
  display: flex;
  height: 92px;
  padding: 2px 0 1px;
  background-color: #f5f6f7;
  border-bottom: 1px solid #dadbdc;
  color: #3b3b3b;
}
.group {
  display: flex;
  flex-direction: column;
  justify-content: space-between;
  padding: 0 3px;
  border-right: 1px solid #e2e3e4;
}
.group-body {
  display: flex;
}
.group-name {
  text-align: center;
  color: #5c5c5c;
}
.big {
  display: flex;
  flex-direction: column;
  align-items: center;
  line-height: 13px;
}
.big .caret {
  margin-top: 4px;
}
.pic {
  display: flex;
  align-items: center;
  height: 40px;
}
.pin-big {
  width: 20px;
  height: 20px;
}
button:disabled {
  color: #9a9a9a;
}
.small-list {
  padding: 2px 0 0 4px;
}
.small-list button {
  display: flex;
  align-items: center;
  gap: 3px;
  height: 22px;
}
.small-list .caret {
  margin-left: 2px;
}
.split {
  width: 1px;
  height: 54px;
  margin: 7px 3px 0;
  background-color: #e2e3e4;
}
.w54 { width: 54px; }
.w56 { width: 56px; }
.w60 { width: 60px; }
.w62 { width: 62px; }
.w66 { width: 66px; }
.w72 { width: 72px; }
.w90 { width: 90px; }
.w92 { width: 92px; }
.w114 { width: 114px; }
.w116 { width: 116px; }
.w140 { width: 140px; }

/* Quick access toolbar */
.quick {
  display: flex;
  align-items: center;
  gap: 6px;
  height: 25px;
  padding-left: 5px;
  border-bottom: 1px solid #e6e6e6;
}

/* Address bar */
.address-row {
  display: flex;
  align-items: center;
  height: 34px;
  padding: 0 12px 0 11px;
}
.go {
  width: 30px;
  color: #666;
}
.go.recent {
  width: 14px;
}
.go:disabled {
  color: #d6d6d6;
}
.go:last-of-type {
  width: 21px;
}
.flip {
  transform: rotate(180deg);
}
.up-arrow {
  transform: rotate(90deg);
}
.address {
  display: flex;
  flex: 1;
  align-items: center;
  height: 22px;
  padding-left: 2px;
  border: 1px solid #d9d9d9;
}
.sep {
  width: 8px;
  height: 8px;
  margin: 0 9px;
  color: #777;
  transform: rotate(-90deg);
}
.sep.first {
  margin: 0 7px;
}
.drop {
  margin-left: auto;
  width: 12px;
  color: #666;
}
.refresh {
  width: 17px;
  height: 20px;
  padding-left: 3px;
  border-left: 1px solid #d9d9d9;
}
.search {
  display: flex;
  align-items: center;
  width: 202px;
  height: 22px;
  margin-left: 12px;
  padding: 0 8px;
  border: 1px solid #d9d9d9;
}
.search input {
  flex: 1;
  min-width: 0;
  padding: 0;
  border: none;
  outline: none;
  font: inherit;
  font-size: 12px;
}
.search input::placeholder {
  color: #6d6d6d;
}

/* Content */
.content {
  position: relative;
  display: flex;
  flex: 1;
  min-height: 0;
}
.sidebar {
  width: 226px;
  padding: 9px 2px 0 0;
  border-right: 1px solid #f4f4f4;
}
.sidebar ul {
  margin-bottom: 8px;
}
.sidebar a {
  display: flex;
  align-items: center;
  gap: 5px;
  height: 24px;
  padding-left: 32px;
  overflow: hidden;
}
.sidebar .top {
  padding-left: 24px;
}
.sidebar .sub {
  padding-left: 40px;
}
.sidebar .current {
  background-color: #d9d9d9;
}
.pin {
  width: 10px;
  height: 10px;
  margin-left: auto;
  margin-right: 3px;
}
.files {
  padding: 7px 15px;
}
.files a {
  display: flex;
  align-items: center;
  gap: 2px;
  width: 180px;
  height: 20px;
  margin-bottom: 1px;
  padding-left: 3px;
  border: 1px solid transparent;
}
.files .selected {
  background-color: #cce8ff;
  border-color: #99d1ff;
}

/* Overlays on the desktop */
.watermark {
  position: absolute;
  right: 80px;
  bottom: 27px;
  color: #bfbfbf;
  font-size: 14px;
  line-height: 20px;
}
.watermark p {
  margin: 0;
}
.watermark .watermark-title {
  font-size: 19px;
  line-height: 26px;
}
.drawer {
  position: absolute;
  right: -7px;
  bottom: 21px;
}

/* Status bar */
.status {
  display: flex;
  align-items: center;
  height: 22px;
  padding: 0 7px 0 14px;
  gap: 21px;
  color: #1e3264;
}
.views {
  display: flex;
  gap: 6px;
  margin-left: auto;
}

/* Taskbar */
.taskbar {
  display: flex;
  gap: 1px;
  height: 40px;
  background: linear-gradient(90deg, #060d1b, #0b1422 35%, #0a1322 75%, #1b1e22 85%, #1f2225);
  color: #fff;
}
.task {
  display: flex;
  align-items: center;
  justify-content: center;
  width: 48px;
}
.task span {
  display: flex;
  align-items: center;
  justify-content: center;
  width: 40px;
  height: 40px;
}
.task .opera {
  background-color: #97181d;
  border-bottom: 2px solid #f00;
}
.task.active {
  background-color: #424a55;
  border-bottom: 2px solid #a9c5f0;
}
.task.open span {
  background-color: #1b2027;
  border-bottom: 2px solid #a9c5f0;
}
.tray {
  display: flex;
  align-items: center;
  gap: 8px;
  margin-left: auto;
  margin-right: 4px;
  padding-right: 20px;
  border-right: 1px solid #6b6d70;
}
.time {
  width: 58px;
  text-align: center;
  line-height: 18px;
}
.tray button {
  margin-left: 8px;
}
```
